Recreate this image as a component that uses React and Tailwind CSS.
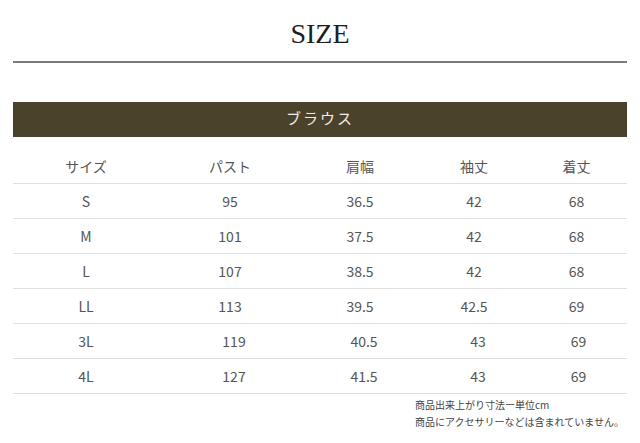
import React from "react";

const columns = [
  { key: "size", label: "サイズ", width: "w-[146px]" },
  { key: "bust", label: "パスト", width: "w-[142px]" },
  { key: "shoulder", label: "肩幅", width: "w-[118px]" },
  { key: "sleeve", label: "袖丈", width: "w-[110px]" },
  { key: "length", label: "着丈", width: "w-[95px]" },
];

const rows = [
  { size: "S", bust: "95", shoulder: "36.5", sleeve: "42", length: "68" },
  { size: "M", bust: "101", shoulder: "37.5", sleeve: "42", length: "68" },
  { size: "L", bust: "107", shoulder: "38.5", sleeve: "42", length: "68" },
  { size: "LL", bust: "113", shoulder: "39.5", sleeve: "42.5", length: "69" },
  { size: "3L", bust: "119", shoulder: "40.5", sleeve: "43", length: "69", shift: true },
  { size: "4L", bust: "127", shoulder: "41.5", sleeve: "43", length: "69", shift: true },
];

// the last two rows sit a few px to the right in the original
const shiftClass = {
  size: "",
  bust: "pl-[8px]",
  shoulder: "pl-[8px]",
  sleeve: "pl-[8px]",
  length: "pl-[4px]",
};

const jp = { fontFamily: '"Noto Sans CJK JP", "Noto Sans", sans-serif' };

export default function App() {
  return (
    <div className="w-[640px] h-[443px] bg-white overflow-hidden">
      {/* Title */}
      <h1
        className="pt-[20px] text-center text-[28px] leading-[28px] text-[#1e1e1e]"
        style={{ fontFamily: '"Liberation Serif", "Times New Roman", serif' }}
      >
        SIZE
      </h1>
      <div className="mx-[13px] mt-[13px] h-[2px] bg-[#7a7a7a]" />

      {/* Section bar */}
      <div
        className="mx-[13px] mt-[39px] h-[35px] bg-[#4b422b] flex items-center justify-center pb-[2px] text-[15px] tracking-[2px] text-[#efece4]"
        style={jp}
      >
        ブラウス
      </div>

      {/* Table */}
      <div className="mx-[13px] text-[#555]" style={jp}>
        <div className="flex h-[47px] border-b border-[#e0e0e0] pt-[19px] text-[14px] leading-[20px]">
          {columns.map((col) => (
            <div key={col.key} className={`${col.width} text-center`}>
              {col.label}
            </div>
          ))}
        </div>

        {rows.map((row) => (
          <div
            key={row.size}
            className="flex items-center h-[35px] border-b border-[#e0e0e0] text-[14px]"
          >
            {columns.map((col) => (
              <div
                key={col.key}
                className={`${col.width} text-center ${row.shift ? shiftClass[col.key] : ""}`}
              >
                {row[col.key]}
              </div>
            ))}
          </div>
        ))}
      </div>

      {/* Notes */}
      <div
        className="ml-[415px] mt-[2px] text-[10px] leading-[17px] text-[#444]"
        style={jp}
      >
        <p>商品出来上がり寸法ー単位cm</p>
        <p>商品にアクセサリーなどは含まれていません。</p>
      </div>
    </div>
  );
}
